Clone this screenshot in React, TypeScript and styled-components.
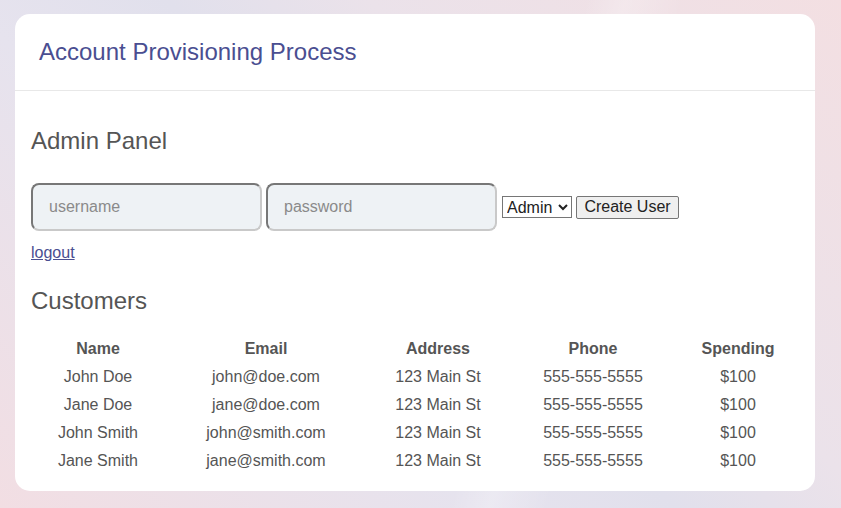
import React from "react";
import styled, { createGlobalStyle } from "styled-components";

const GlobalStyle = createGlobalStyle`
  html, body { margin: 0; padding: 0; height: 100%; }
  body {
    font-family: "Liberation Sans", Arial, sans-serif;
    background: linear-gradient(45deg, #f2dee3 0%, #e6e3ee 35%, #e1e0ec 50%, #ebe2ea 65%, #f3dfe2 100%);
    min-height: 100vh;
  }
  #root { min-height: 100vh; }
`;

const Page = styled.div`
  padding: 14px 15px 17px;
  box-sizing: border-box;
  min-height: 100vh;
  position: relative;
  overflow: hidden;
`;

const Streak = styled.div`
  position: absolute;
  inset: 0;
  pointer-events: none;
  background: linear-gradient(105deg, transparent 60%, rgba(255, 255, 255, 0.25) 64%, transparent 70%);
`;

const Card = styled.div`
  position: relative;
  width: 800px;
  background: #fff;
  border-radius: 15px;
  overflow: hidden;
`;

const Header = styled.div`
  padding: 24px 24px;
  border-bottom: 1px solid #e8e8e8;
`;

const Title = styled.h1`
  margin: 0;
  font-size: 24px;
  line-height: 28px;
  font-weight: 400;
  color: #4a4e91;
`;

const Body = styled.div`
  padding: 16px 16px 16px;
  display: flex;
  flex-direction: column;
  align-items: flex-start;
`;

const SectionTitle = styled.h2<{ $top: number }>`
  margin: ${(p) => p.$top}px 0 0;
  font-size: 24px;
  line-height: 28px;
  font-weight: 400;
  color: #555;
`;

const FormRow = styled.div`
  margin-top: 28px;
  display: flex;
  align-items: center;
  gap: 4px;
`;

const TextInput = styled.input`
  box-sizing: border-box;
  width: 231px;
  height: 48px;
  padding: 0 16px;
  border-radius: 8px;
  border: 2px solid;
  border-color: #777 #c9c9c9 #c9c9c9 #777;
  background: #eef2f5;
  font-family: "Liberation Sans", Arial, sans-serif;
  font-size: 16px;
  color: #333;
  outline: none;
  &::placeholder { color: #8a8a8a; }
`;

const RoleSelect = styled.select`
  box-sizing: border-box;
  width: 70px;
  height: 22px;
  font-family: "Liberation Sans", Arial, sans-serif;
  font-size: 16px;
  color: #222;
  background: #fff;
  border: 1px solid #767676;
  border-radius: 0;
  padding: 0;
  margin-left: 1px;
`;

const Button = styled.button`
  box-sizing: border-box;
  width: 103px;
  height: 23px;
  padding: 1px 0;
  font-family: "Liberation Sans", Arial, sans-serif;
  font-size: 16px;
  color: #222;
  background: #efefef;
  border: 1px solid #767676;
  border-radius: 2px;
`;

const Link = styled.a`
  margin-top: 13px;
  font-size: 16px;
  line-height: 18px;
  color: #4a4e91;
  text-decoration: underline;
`;

const Table = styled.table`
  margin-top: 20px;
  width: 100%;
  border-collapse: collapse;
  color: #555;
  font-size: 16px;
`;

const Th = styled.th<{ $w: number }>`
  width: ${(p) => p.$w}px;
  height: 28px;
  padding: 0;
  text-align: center;
  font-weight: 700;
`;

const Td = styled.td`
  height: 28px;
  padding: 0;
  text-align: center;
`;

const columns = [
  { label: "Name", w: 134 },
  { label: "Email", w: 202 },
  { label: "Address", w: 142 },
  { label: "Phone", w: 168 },
  { label: "Spending", w: 122 },
];

const customers = [
  ["John Doe", "john@doe.com", "123 Main St", "555-555-5555", "$100"],
  ["Jane Doe", "jane@doe.com", "123 Main St", "555-555-5555", "$100"],
  ["John Smith", "john@smith.com", "123 Main St", "555-555-5555", "$100"],
  ["Jane Smith", "jane@smith.com", "123 Main St", "555-555-5555", "$100"],
];

export default function App() {
  return (
    <>
      <GlobalStyle />
      <Page>
        <Streak />
        <Card>
          <Header>
            <Title>Account Provisioning Process</Title>
          </Header>
          <Body>
            <SectionTitle $top={20}>Admin Panel</SectionTitle>
            <FormRow>
              <TextInput placeholder="username" />
              <TextInput type="password" placeholder="password" />
              <RoleSelect defaultValue="Admin">
                <option>Admin</option>
                <option>User</option>
              </RoleSelect>
              <Button>Create User</Button>
            </FormRow>
            <Link href="#">logout</Link>
            <SectionTitle $top={25}>Customers</SectionTitle>
            <Table>
              <thead>
                <tr>
                  {columns.map((c) => (
                    <Th key={c.label} $w={c.w}>
                      {c.label}
                    </Th>
                  ))}
                </tr>
              </thead>
              <tbody>
                {customers.map((row) => (
                  <tr key={row[1]}>
                    {row.map((cell, i) => (
                      <Td key={i}>{cell}</Td>
                    ))}
                  </tr>
                ))}
              </tbody>
            </Table>
          </Body>
        </Card>
      </Page>
    </>
  );
}
